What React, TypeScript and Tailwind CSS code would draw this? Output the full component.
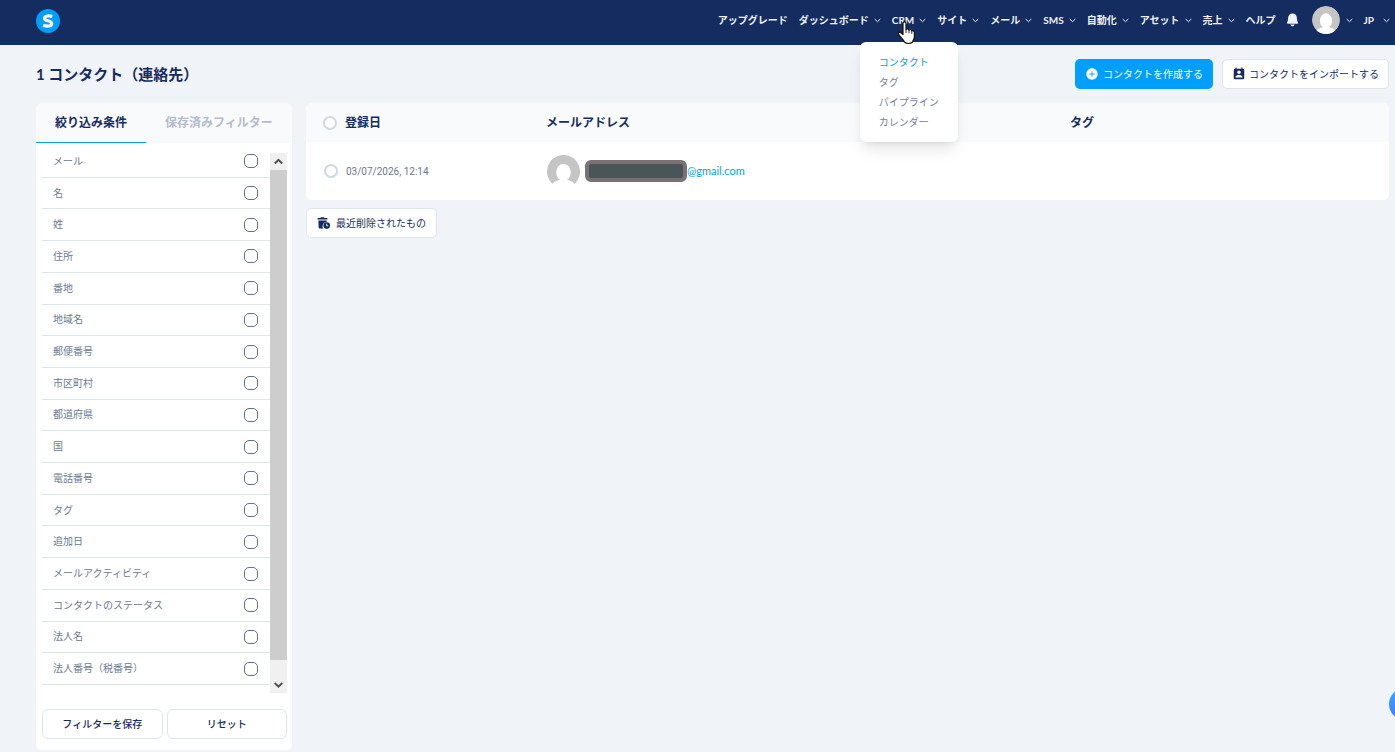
import { IoIosAddCircle } from 'react-icons/io';
import { MdPermContactCalendar } from 'react-icons/md';

const menus = ['サイト', 'メール', 'SMS', '自動化', 'アセット', '売上'];

const crmLinks = ['コンタクト', 'タグ', 'パイプライン', 'カレンダー'];

const filters = [
  'メール',
  '名',
  '姓',
  '住所',
  '番地',
  '地域名',
  '郵便番号',
  '市区町村',
  '都道府県',
  '国',
  '電話番号',
  'タグ',
  '追加日',
  'メールアクティビティ',
  'コンタクトのステータス',
  '法人名',
  '法人番号（税番号）',
];

function Chevron() {
  return (
    <svg className="w-[7px] h-[5px] shrink-0" viewBox="0 0 7 5" fill="none" stroke="currentColor" aria-hidden="true">
      <path d="M0.7 1 L3.5 3.7 L6.3 1" />
    </svg>
  );
}

function Bell() {
  return (
    <svg className="w-[14px] h-[14px]" viewBox="0 0 14 14" fill="currentColor" aria-hidden="true">
      <path d="M5.5 0.5 C8.3 0.5 9.8 2.4 9.9 5 C10 7.5 10.3 8.2 11 9.4 C11.3 10 11 10.8 10.2 10.8 H0.8 C0 10.8 -0.3 10 0 9.4 C0.7 8.2 1 7.5 1.1 5 C1.2 2.4 2.7 0.5 5.5 0.5 Z" />
      <path d="M3.4 11.5 H7.6 C7.3 12.7 6.5 13.3 5.5 13.3 C4.5 13.3 3.7 12.7 3.4 11.5 Z" />
    </svg>
  );
}

function TrashClock() {
  return (
    <svg className="w-[14px] h-[14px]" viewBox="0 0 14 14" aria-hidden="true">
      <path
        d="M3.6 1.2 H7.4 V2 H10.4 V3.6 H0.6 V2 H3.6 Z M1.4 4.4 H9.7 V5.9 A4 4 0 0 0 6.6 12.6 H3 C2.2 12.6 1.7 12.1 1.6 11.3 Z"
        fill="currentColor"
      />
      <circle cx="9.7" cy="9.6" r="3.3" fill="currentColor" />
      <path d="M9.7 7.8 V9.8 H11.2" fill="none" stroke="#fff" strokeWidth="0.9" />
    </svg>
  );
}

function Avatar({ className }: { className: string }) {
  return (
    <svg className={className} viewBox="0 0 80 80" aria-hidden="true">
      <circle cx="40" cy="40" r="40" fill="#c5c5c5" />
      <ellipse cx="40" cy="42" rx="17.5" ry="21" fill="#fff" />
      <path d="M12 71 C18 63 27 62 32 60 H48 C53 62 62 63 68 71 L66 80 H14 Z" fill="#fff" />
    </svg>
  );
}

function HandPointer() {
  return (
    <svg
      className="absolute left-[5px] top-[9px] w-[19px] h-[24px] z-30 pointer-events-none"
      viewBox="0 0 19 24"
      aria-hidden="true"
    >
      <path
        d="M6 2.6 C6 0.4 9 0.4 9 2.6 V8.6 C9.4 7.4 11.8 7.5 12 9.2 C12.6 8.2 14.7 8.5 14.8 10.1 C15.6 9.4 17.4 9.8 17.4 11.6 V15.5 C17.4 18 16 19 15.6 21 C13.5 23 9.5 23 7.4 21 C6.6 18.6 3.4 16 1.6 13.4 C0.6 11.6 2.6 10.4 4 11.7 L6 13.6 Z"
        fill="#fff"
        stroke="#111"
        strokeWidth="1.2"
        strokeLinejoin="round"
      />
      <path d="M9 8.5 V12 M12 9.3 V12.3 M14.8 10.3 V12.8" stroke="#111" strokeWidth="0.9" fill="none" />
    </svg>
  );
}

function TopBar() {
  return (
    <header className="flex h-[45px] items-center justify-between bg-[#152c61] pl-9 pr-[5px] pb-[5px] text-[#eef1f6]">
      <a href="#home" aria-label="Home" className="mt-[2px]">
        <svg className="w-6 h-6" viewBox="0 0 24 24" aria-hidden="true">
          <circle cx="12" cy="12" r="12" fill="#009fff" />
          <path
            d="M16.2 7.5 C13.5 6.6 8.6 6.4 8.6 9.4 C8.6 12.4 15.6 11.2 15.6 14.4 C15.6 17.7 10.2 17.4 7.2 16.2"
            fill="none"
            stroke="#fff"
            strokeWidth="3.2"
          />
        </svg>
      </a>
      <nav className="flex items-center gap-[11px] text-[10px] leading-4 font-bold whitespace-nowrap">
        <a href="#upgrade">アップグレード</a>
        <button type="button" className="flex items-center gap-[5px]">
          ダッシュボード
          <Chevron />
        </button>
        <div className="relative">
          <button type="button" aria-expanded="true" className="flex items-center gap-[5px]">
            CRM
            <Chevron />
          </button>
          <HandPointer />
          <ul className="absolute -left-8 top-[30px] z-20 w-[98px] rounded-md bg-white py-[10px] pl-[19px] font-normal leading-5 text-[#74839c] shadow-lg">
            {crmLinks.map((link, index) => (
              <li key={link}>
                <a href="#crm" className={index === 0 ? 'text-[#009fff]' : ''}>
                  {link}
                </a>
              </li>
            ))}
          </ul>
        </div>
        {menus.map((menu) => (
          <button key={menu} type="button" className="flex items-center gap-[5px]">
            {menu}
            <Chevron />
          </button>
        ))}
        <a href="#help">ヘルプ</a>
        <button type="button" aria-label="Notifications">
          <Bell />
        </button>
        <button type="button" aria-label="Account" className="flex items-center gap-[6px]">
          <Avatar className="w-7 h-7 rounded-full" />
          <Chevron />
        </button>
        <button type="button" className="flex items-center gap-[9px]">
          JP
          <Chevron />
        </button>
      </nav>
    </header>
  );
}

function FilterPanel() {
  return (
    <aside className="w-64 shrink-0 overflow-hidden rounded-md bg-white">
      <div className="flex h-10 bg-[#f9fafc] text-xs font-bold" role="tablist">
        <button type="button" role="tab" aria-selected="true" className="w-[110px] border-b border-[#009fff]">
          絞り込み条件
        </button>
        <button type="button" role="tab" aria-selected="false" className="flex-1 text-[#b4bdcb]">
          保存済みフィルター
        </button>
      </div>
      <div className="flex pl-[6px] pr-[5px] pt-[3px]">
        <ul className="grid h-[539px] flex-1 auto-rows-fr text-[10px] text-[#6b7a94]">
          {filters.map((filter) => (
            <li key={filter} className="border-b border-[#dfe5e9]">
              <label className="flex h-full items-center justify-between pl-[11px] pr-3">
                {filter}
                <input
                  type="checkbox"
                  className="w-[14px] h-[14px] appearance-none rounded-[5px] border border-[#5f7191] bg-white checked:bg-[#009fff]"
                />
              </label>
            </li>
          ))}
        </ul>
        <div className="mt-[7px] flex h-[540px] w-[17px] flex-col bg-[#f0f0f0]" aria-hidden="true">
          <svg className="w-[17px] h-[17px]" viewBox="0 0 17 17" fill="none" stroke="#505050" strokeWidth="2">
            <path d="M4.8 10.5 L8.5 6.8 L12.2 10.5" />
          </svg>
          <div className="flex-1 bg-[#cdcdcd]" />
          <svg className="mt-4 w-[17px] h-[17px]" viewBox="0 0 17 17" fill="none" stroke="#505050" strokeWidth="2">
            <path d="M4.8 7 L8.5 10.7 L12.2 7" />
          </svg>
        </div>
      </div>
      <div className="grid grid-cols-2 gap-1 pl-[6px] pr-[5px] pt-4 pb-[11px] text-[10px] font-medium">
        <button type="button" className="h-[30px] rounded-md border border-[#dfe5e9]">
          フィルターを保存
        </button>
        <button type="button" className="h-[30px] rounded-md border border-[#dfe5e9]">
          リセット
        </button>
      </div>
    </aside>
  );
}

function ContactTable() {
  return (
    <div className="overflow-hidden rounded-md bg-white">
      <table className="w-full table-fixed text-left">
        <thead>
          <tr className="h-[39px] bg-[#f9fafc] text-xs">
            <th className="w-[240px] pl-[17px]">
              <label className="flex items-center gap-2">
                <input
                  type="checkbox"
                  className="w-[14px] h-[14px] appearance-none rounded-full border-2 border-[#d0d8e4] bg-white checked:bg-[#009fff]"
                />
                登録日
              </label>
            </th>
            <th className="w-[524px]">メールアドレス</th>
            <th>タグ</th>
          </tr>
        </thead>
        <tbody>
          <tr className="h-[58px] text-[10px]">
            <td className="pl-[18px] text-[#6b7a94]">
              <label className="flex items-center gap-2 font-[Roboto,sans-serif]">
                <input
                  type="checkbox"
                  className="w-[14px] h-[14px] appearance-none rounded-full border-2 border-[#d0d8e4] bg-white checked:bg-[#009fff]"
                />
                03/07/2026, 12:14
              </label>
            </td>
            <td>
              <a href="#contact" className="flex items-center pl-px text-[11px] text-[#009fff]">
                <Avatar className="w-[33px] h-[33px]" />
                <span className="ml-[5px] h-[22px] w-[102px] rounded-md border-4 border-[#797274] bg-[#4a5559]" />
                @gmail.com
              </a>
            </td>
            <td />
          </tr>
        </tbody>
      </table>
    </div>
  );
}

export default function App() {
  return (
    <div className="min-h-screen overflow-hidden bg-[#f0f3f8] font-[Lato,'Noto_Sans_CJK_JP',sans-serif] text-[#152c61]">
      <TopBar />
      <main className="pl-9 pr-[6px] pt-[14px] pb-[2px]">
        <div className="flex items-center justify-between">
          <h1 className="text-[15px] leading-[30px] font-bold">1 コンタクト（連絡先）</h1>
          <div className="flex gap-[9px] text-[10px]">
            <button type="button" className="flex h-[30px] items-center gap-1 rounded-[5px] bg-[#009fff] px-[10px] text-white">
              <IoIosAddCircle className="w-[14px] h-[14px]" />
              コンタクトを作成する
            </button>
            <button type="button" className="flex h-[30px] items-center gap-[3px] rounded-[5px] border border-[#dfe5e9] bg-white px-[9px]">
              <MdPermContactCalendar className="w-[14px] h-[14px]" />
              コンタクトをインポートする
            </button>
          </div>
        </div>
        <div className="mt-[14px] flex items-start gap-[14px]">
          <FilterPanel />
          <section className="min-w-0 flex-1">
            <ContactTable />
            <button type="button" className="mt-2 flex h-[30px] items-center gap-[5px] rounded-[5px] border border-[#dfe5e9] bg-white px-[10px] text-[10px]">
              <TrashClock />
              最近削除されたもの
            </button>
          </section>
        </div>
      </main>
      <button
        type="button"
        aria-label="Chat"
        className="fixed bottom-8 -right-[26px] h-8 w-8 rounded-full bg-linear-to-b from-[#3ba9ff] to-[#4274ff]"
      />
    </div>
  );
}
